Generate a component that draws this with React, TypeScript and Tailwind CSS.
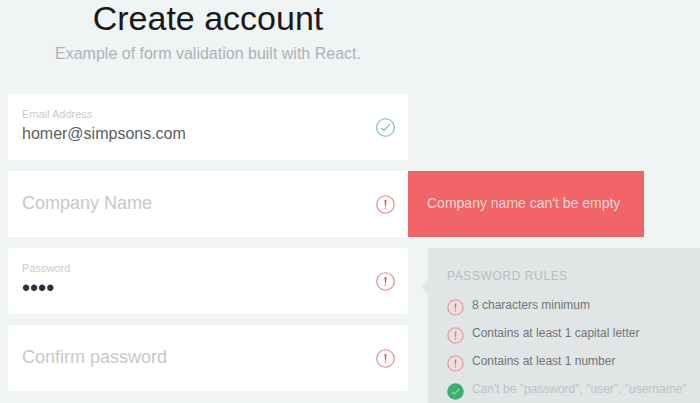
import { useState } from "react";

type Status = "valid" | "error";

function StatusIcon({ status, className }: { status: Status; className: string }) {
  if (status === "valid") {
    return (
      <svg viewBox="0 0 20 20" className={className} fill="none" stroke="#6fb395" aria-hidden="true">
        <circle cx="10" cy="10" r="9.3" strokeWidth="1.1" />
        <path d="M5.4 10.6 8.4 12.9 14.6 6.8" strokeWidth="1.1" />
      </svg>
    );
  }
  return (
    <svg viewBox="0 0 20 20" className={className} fill="none" aria-hidden="true">
      <circle cx="10" cy="10" r="9.2" stroke="#e88488" strokeWidth="1.2" />
      <path d="M8.9 5.2h2.2l-.6 6.8h-1z" fill="#e4575b" />
      <circle cx="10" cy="14" r=".8" fill="#e4575b" />
    </svg>
  );
}

function RuleIcon({ met }: { met: boolean }) {
  if (met) {
    return (
      <svg viewBox="0 0 17 17" className="mt-0.5 size-[17px] shrink-0" fill="none" aria-hidden="true">
        <circle cx="8.5" cy="8.5" r="8.3" fill="#3fae74" />
        <path d="M5 8.9 7.5 11 12.2 6" stroke="#c9ecd9" strokeWidth="1" />
      </svg>
    );
  }
  return (
    <svg viewBox="0 0 17 17" className="mt-0.5 size-[17px] shrink-0" fill="none" aria-hidden="true">
      <circle cx="8.5" cy="8.5" r="7.6" fill="#ecdfe0" stroke="#e3a0a4" strokeWidth="1.4" />
      <path d="M7.6 4.4h1.8l-.5 5.8h-.8z" fill="#d9777c" />
      <circle cx="8.5" cy="12" r=".8" fill="#d9777c" />
    </svg>
  );
}

interface FieldProps {
  id: string;
  label: string;
  type: string;
  initial?: string;
  status: Status;
}

function Field({ id, label, type, initial = "", status }: FieldProps) {
  const [value, setValue] = useState(initial);
  const filled = value !== "";
  const textStyle = !filled
    ? "text-lg/6"
    : type === "password"
      ? "text-[23px]/6 text-[#2b2e3a]"
      : "text-base/6 text-[#5a5d61]";
  return (
    <div className="flex h-[66px] items-center bg-white pr-[13px] pl-3.5">
      <div className="flex min-w-0 flex-1 flex-col pb-0.5">
        {filled && (
          <label htmlFor={id} className="text-[11px]/4 text-[#c9cbcd]">
            {label}
          </label>
        )}
        <input
          id={id}
          type={type}
          value={value}
          aria-label={label}
          placeholder={label}
          onChange={(e) => setValue(e.target.value)}
          className={`h-6 w-full bg-transparent outline-none placeholder:text-[#c6c8ca] ${textStyle}`}
        />
      </div>
      <StatusIcon status={status} className="size-[19px] shrink-0" />
    </div>
  );
}

const rules = [
  { text: "8 characters minimum", met: false },
  { text: "Contains at least 1 capital letter", met: false },
  { text: "Contains at least 1 number", met: false },
  { text: 'Can\'t be "password", "user", "username"', met: true },
];

export default function App() {
  return (
    <main className="flex min-h-screen flex-col bg-[#f0f4f5] pl-2 font-['Liberation_Sans',Arial,sans-serif]">
      <header className="w-full max-w-[400px] text-center">
        <h1 className="text-[34px]/9 text-[#17191b]">Create account</h1>
        <p className="mt-1.5 text-base/6 text-[#aeb2b5]">Example of form validation built with React.</p>
      </header>

      <div className="mt-7 flex flex-1">
        <form className="flex w-full max-w-[400px] shrink-0 flex-col gap-[11px]">
          <Field id="email" label="Email Address" type="email" initial="homer@simpsons.com" status="valid" />
          <Field id="company" label="Company Name" type="text" status="error" />
          <Field id="password" label="Password" type="password" initial="abcd" status="error" />
          <Field id="confirm" label="Confirm password" type="password" status="error" />
        </form>

        <div className="flex min-w-0 flex-1 flex-col items-start gap-[11px] pt-[77px]">
          <p
            role="alert"
            className="flex h-[66px] min-w-[236px] items-center bg-[#f16568] px-[19px] pb-0.5 text-sm text-[#fbd5d5]"
          >
            Company name can't be empty
          </p>

          <div className="flex w-full flex-1">
            <div className="flex w-5 shrink-0 justify-end pt-8">
              <svg viewBox="0 0 7 14" className="h-3.5 w-[7px]" aria-hidden="true">
                <path d="M7 0v14L0 7z" fill="#e1e5e6" />
              </svg>
            </div>
            <section className="min-w-0 flex-1 bg-[#e1e5e6] pt-5 pl-[19px]">
              <h2 className="text-xs/4 tracking-wider text-[#b9bdbf] uppercase">Password rules</h2>
              <ul className="mt-[13px]">
                {rules.map((rule) => (
                  <li key={rule.text} className="flex h-7 items-start gap-2">
                    <RuleIcon met={rule.met} />
                    <span className={`text-xs/4 ${rule.met ? "text-[#bec2c4]" : "text-[#707577]"}`}>{rule.text}</span>
                  </li>
                ))}
              </ul>
            </section>
          </div>
        </div>
      </div>
    </main>
  );
}
